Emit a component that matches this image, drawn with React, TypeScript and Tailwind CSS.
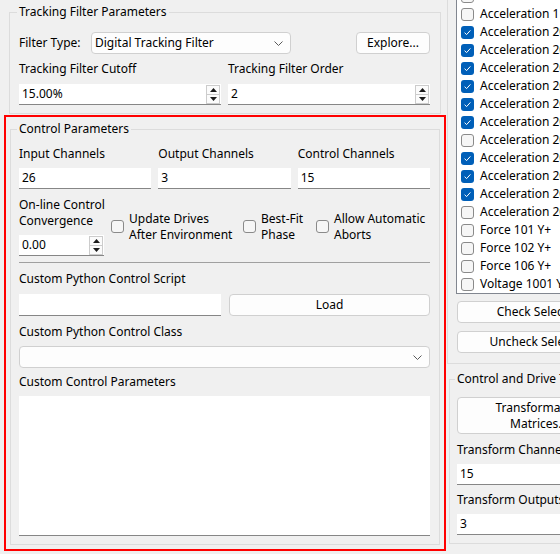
import React from "react";

const ROWS: { label: string; on: boolean }[] = [
  { label: "Acceleration 1 Z+", on: false },
  { label: "Acceleration 1 Z+", on: false },
  { label: "Acceleration 201 X+", on: true },
  { label: "Acceleration 201 Y+", on: true },
  { label: "Acceleration 201 Z+", on: true },
  { label: "Acceleration 202 X+", on: true },
  { label: "Acceleration 202 Y+", on: true },
  { label: "Acceleration 202 Z+", on: true },
  { label: "Acceleration 203 X+", on: false },
  { label: "Acceleration 203 Y+", on: true },
  { label: "Acceleration 203 Z+", on: true },
  { label: "Acceleration 204 X+", on: true },
  { label: "Acceleration 204 Y+", on: false },
  { label: "Force 101 Y+", on: false },
  { label: "Force 102 Y+", on: false },
  { label: "Force 106 Y+", on: false },
  { label: "Voltage 1001 Y+", on: false },
];

function Check({ on }: { on?: boolean }) {
  if (on)
    return (
      <span className="flex h-[13px] w-[13px] shrink-0 items-center justify-center rounded-[3px] bg-[#005fb8]">
        <svg width="9" height="9" viewBox="0 0 9 9">
          <path d="M1.6 4.7 3.6 6.6 7.4 2.4" fill="none" stroke="#ffffff" strokeWidth="1" />
        </svg>
      </span>
    );
  return <span className="h-[13px] w-[13px] shrink-0 rounded-[3px] border border-[#8a8a8a] bg-[#f6f6f6]" />;
}

function TextBox({ value = "", className = "" }: { value?: string; className?: string }) {
  return (
    <div className={`flex h-[21px] items-center border-b border-[#868686] bg-white pl-[3px] ${className}`}>
      {value}
    </div>
  );
}

function SpinBox({ value, className = "" }: { value: string; className?: string }) {
  return (
    <div className={`flex h-[21px] items-center border-b border-[#868686] bg-white pl-[3px] pr-[1px] ${className}`}>
      <span className="flex-1">{value}</span>
      <div className="flex h-[19px] w-[14px] flex-col border border-[#cccccc] bg-[#fbfbfb]">
        <div className="flex flex-1 items-center justify-center border-b border-[#cccccc]">
          <svg width="7" height="4" viewBox="0 0 7 4">
            <path d="M0 4 3.5 0 7 4Z" fill="#1a1a1a" />
          </svg>
        </div>
        <div className="flex flex-1 items-center justify-center">
          <svg width="7" height="4" viewBox="0 0 7 4">
            <path d="M0 0 3.5 4 7 0Z" fill="#1a1a1a" />
          </svg>
        </div>
      </div>
    </div>
  );
}

function Combo({ value = "", className = "" }: { value?: string; className?: string }) {
  return (
    <div
      className={`flex h-[22px] items-center rounded-[4px] border border-[#d0d0d0] bg-[#fdfdfd] pl-[3px] pr-[7px] ${className}`}
    >
      <span className="flex-1">{value}</span>
      <svg width="9" height="5" viewBox="0 0 9 5">
        <path d="M0.5 0.5 4.5 4.5 8.5 0.5" fill="none" stroke="#5a5a5a" strokeWidth="1" />
      </svg>
    </div>
  );
}

function Button({ children, className = "" }: { children: React.ReactNode; className?: string }) {
  return (
    <div
      className={`flex items-center justify-center rounded-[4px] border border-[#d0d0d0] bg-[#fdfdfd] text-center ${className}`}
    >
      {children}
    </div>
  );
}

function Option({ lines, className = "" }: { lines: string[]; className?: string }) {
  return (
    <div className={`flex items-center ${className}`}>
      <Check />
      <div className="ml-[5px] flex flex-col">
        {lines.map((l) => (
          <span key={l} className="whitespace-nowrap">
            {l}
          </span>
        ))}
      </div>
    </div>
  );
}

export default function App() {
  return (
    <div className="flex h-[554px] w-[560px] overflow-hidden bg-[#f0f0f0] font-['Noto_Sans',sans-serif] text-[12px] leading-[16px] text-black">
      {/* left column */}
      <div className="flex w-[447px] shrink-0 flex-col">
        <fieldset className="ml-[9px] mt-[4px] w-[432px] border border-[#dcdcdc] pb-[8px] pl-[9px] pr-[10px]">
          <legend className="-ml-[2px] px-[2px]">Tracking Filter Parameters</legend>
          <div className="mt-[12px] flex items-center">
            <span className="w-[72px]">Filter Type:</span>
            <Combo value="Digital Tracking Filter" className="w-[200px]" />
            <Button className="ml-auto h-[22px] w-[74px]">Explore...</Button>
          </div>
          <div className="mt-[7px] grid grid-cols-2 gap-x-[7px]">
            <span>Tracking Filter Cutoff</span>
            <span>Tracking Filter Order</span>
            <SpinBox value="15.00%" className="mt-[7px]" />
            <SpinBox value="2" className="mt-[7px]" />
          </div>
        </fieldset>

        <div className="ml-[4px] mt-[1px] h-[436px] w-[442px] border-2 border-[#ff0000] px-[4px] pb-[4px] pt-[4px]">
          <fieldset className="flex h-full flex-col border border-[#dcdcdc] pb-[8px] pl-[8px] pr-[9px]">
            <legend className="-ml-[2px] px-[2px]">Control Parameters</legend>
            <div className="mt-[9px] grid grid-cols-3 gap-x-[7px]">
              <span>Input Channels</span>
              <span>Output Channels</span>
              <span>Control Channels</span>
              <TextBox value="26" className="mt-[6px]" />
              <TextBox value="3" className="mt-[6px]" />
              <TextBox value="15" className="mt-[6px]" />
            </div>
            <div className="mt-[8px] flex items-center">
              <div className="flex w-[92px] shrink-0 flex-col">
                <span className="whitespace-nowrap">On-line Control</span>
                <span>Convergence</span>
                <SpinBox value="0.00" className="mt-[6px] w-[85px]" />
              </div>
              <Option lines={["Update Drives", "After Environment"]} className="w-[132px]" />
              <Option lines={["Best-Fit", "Phase"]} className="w-[73px]" />
              <Option lines={["Allow Automatic", "Aborts"]} className="flex-1" />
            </div>
            <div className="mt-[6px] h-px bg-[#a0a0a0]" />
            <span className="mt-[8px]">Custom Python Control Script</span>
            <div className="mt-[7px] flex gap-[8px]">
              <TextBox className="h-[22px] w-[202px]" />
              <Button className="h-[22px] flex-1">Load</Button>
            </div>
            <span className="mt-[8px]">Custom Python Control Class</span>
            <Combo className="mt-[6px] h-[21px] bg-[#f9f9f9]" />
            <span className="mt-[6px]">Custom Control Parameters</span>
            <div className="mt-[6px] flex-1 border-b border-[#868686] bg-white" />
          </fieldset>
        </div>
      </div>

      {/* right column */}
      <div className="flex w-[190px] shrink-0 flex-col">
        <div className="flex flex-col border-b border-l border-[#dcdcdc] pb-[10px]">
          <div className="-mt-[14px] ml-[8px] flex flex-col border border-[#828790] bg-white">
            {ROWS.map((r, i) => (
              <div key={i} className="flex h-[18px] items-center pl-[4px]">
                <Check on={r.on} />
                <span className="ml-[6px] whitespace-nowrap">{r.label}</span>
              </div>
            ))}
          </div>
          <Button className="ml-[9px] mt-[7px] h-[22px] w-[164px]">Check Selected</Button>
          <Button className="ml-[9px] mt-[8px] h-[22px] w-[164px]">Uncheck Selected</Button>
        </div>
        <fieldset className="ml-[2px] mt-[7px] flex flex-col border border-[#dcdcdc] pb-[8px] pl-[7px]">
          <legend className="-ml-[2px] whitespace-nowrap px-[2px]">Control and Drive Transformations</legend>
          <Button className="mt-[10px] h-[37px] w-[164px] flex-col">
            <span>Transformation</span>
            <span>Matrices...</span>
          </Button>
          <span className="mt-[8px] whitespace-nowrap">Transform Channels</span>
          <TextBox value="15" className="mt-[6px] w-[170px]" />
          <span className="mt-[7px] whitespace-nowrap">Transform Outputs</span>
          <TextBox value="3" className="mt-[6px] w-[170px]" />
        </fieldset>
      </div>
    </div>
  );
}
